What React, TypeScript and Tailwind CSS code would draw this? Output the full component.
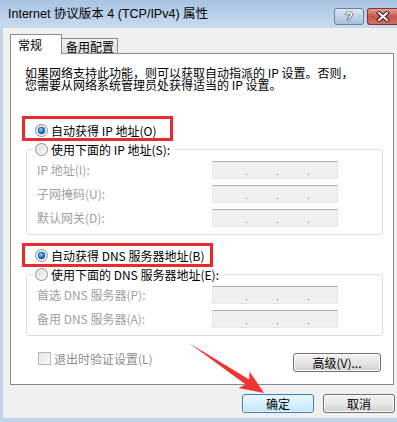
import type { ReactNode } from 'react';

const CJK = "font-['Noto_Sans_CJK_SC','Liberation_Sans',sans-serif]";

function Radio({ checked = false }: { checked?: boolean }) {
  return (
    <svg width="13" height="13" viewBox="0 0 13 13" className="shrink-0">
      <defs>
        <linearGradient id="rfill" x1="0" y1="0" x2="1" y2="1">
          <stop offset="0" stopColor="#d6d6d6" />
          <stop offset="1" stopColor="#ffffff" />
        </linearGradient>
        <radialGradient id="rdot" cx="0.4" cy="0.35" r="0.7">
          <stop offset="0" stopColor="#8fd3ff" />
          <stop offset="0.5" stopColor="#2a8ad4" />
          <stop offset="1" stopColor="#0f3f78" />
        </radialGradient>
      </defs>
      <circle cx="6.5" cy="6.5" r="6" fill="url(#rfill)" stroke="#8e8f8f" strokeWidth="1" />
      <circle cx="6.5" cy="6.5" r="4.5" fill="none" stroke="#f4f4f4" strokeWidth="1" />
      {checked && <circle cx="6.5" cy="6.5" r="3.4" fill="url(#rdot)" stroke="#1c4e86" strokeWidth="0.6" />}
    </svg>
  );
}

function IpField() {
  return (
    <div className="flex h-[18px] w-[126px] items-end gap-[30px] border border-[#e3e9ef] border-t-[#abadb3] bg-[#f0f0f0] pb-[3px] pl-[33px]">
      <span className="h-px w-px bg-[#6d6d6d]" />
      <span className="h-px w-px bg-[#6d6d6d]" />
      <span className="h-px w-px bg-[#6d6d6d]" />
    </div>
  );
}

function FieldRow({ label }: { label: string }) {
  return (
    <div className="flex items-center">
      <span className="w-[175px] text-[12px] leading-[12px] text-[#a0a0a0]">{label}</span>
      <IpField />
    </div>
  );
}

function Group({ legend, children }: { legend: string; children: ReactNode }) {
  return (
    <fieldset className="ml-[15px] mt-[6px] w-[357px] rounded-[3px] border border-[#d5dfe5] pb-[7px]">
      <legend className="ml-[7px] flex items-center gap-[3px] pl-[1px] pr-[5px]">
        <Radio />
        <span className="text-[12px] leading-[13px] text-black">{legend}</span>
      </legend>
      <div className="mt-[5px] flex flex-col gap-[6px] pl-[10px]">{children}</div>
    </fieldset>
  );
}

function WinButton({ children, primary = false, className = '' }: { children: ReactNode; primary?: boolean; className?: string }) {
  return (
    <button
      type="button"
      className={
        'flex h-[19px] items-center justify-center rounded-[3px] border text-[12px] leading-[12px] text-black ' +
        (primary
          ? 'border-[#3c7fb1] bg-gradient-to-b from-[#eaf6fd] via-[#d9f0fc] to-[#bee6fd] shadow-[inset_0_0_0_1px_#e4f3fb]'
          : 'border-[#707070] bg-gradient-to-b from-[#f2f2f2] via-[#e6e6e6] to-[#d0d0d0] shadow-[inset_0_0_0_1px_#fcfcfc]') +
        ' ' +
        className
      }
    >
      {children}
    </button>
  );
}

export default function App() {
  return (
    <div className={`relative flex h-[422px] w-[397px] flex-col overflow-hidden bg-[#bfd5ec] ${CJK}`}>
      {/* title bar */}
      <div className="flex h-[28px] items-start bg-gradient-to-b from-[#a9c3e2] to-[#c8dbf0]">
        <span className="ml-[8px] mt-[7px] font-['Liberation_Sans','Noto_Sans_CJK_SC',sans-serif] text-[12.5px] leading-[15px] text-black">
          Internet 协议版本 4 (TCP/IPv4) 属性
        </span>
        <div className="ml-auto mt-[8px] flex gap-[3px]">
          <div className="flex h-[17px] w-[30px] items-center justify-center rounded-[3px] border border-[#6f7f99] bg-gradient-to-b from-[#dbe7f5] to-[#a7c0df]">
            <span className="font-['Liberation_Sans',sans-serif] text-[13px] font-bold leading-[13px] text-white [text-shadow:0_0_1px_#222,0_0_1px_#222,0_0_1px_#222]">
              ?
            </span>
          </div>
          <div className="flex h-[17px] w-[30px] items-center justify-center rounded-l-[3px] border border-r-0 border-[#80333a] bg-gradient-to-b from-[#e4a093] via-[#c75448] to-[#d1715f]">
            <svg width="14" height="11" viewBox="0 0 14 11">
              <path d="M3 2 L11 9 M11 2 L3 9" stroke="#3a1a1a" strokeWidth="4" strokeLinecap="square" />
              <path d="M3 2 L11 9 M11 2 L3 9" stroke="#ffffff" strokeWidth="2" strokeLinecap="square" />
            </svg>
          </div>
        </div>
      </div>

      {/* client area */}
      <div className="ml-[3px] flex h-[390px] flex-col bg-[#f0f0f0]">
        {/* tabs */}
        <div className="ml-[7px] mt-[6px] flex h-[20px] items-end">
          <div className="relative z-10 flex h-[20px] w-[52px] items-start border border-b-0 border-[#898c95] bg-white pl-[7px] pt-[3px] text-[12px] leading-[13px] text-black">
            常规
          </div>
          <div className="flex h-[16px] w-[56px] items-start border border-b-0 border-l-0 border-[#898c95] bg-gradient-to-b from-[#f2f2f2] to-[#e1e1e1] pl-[4px] pt-[1px] text-[12px] leading-[13px] text-black">
            备用配置
          </div>
        </div>

        {/* panel */}
        <div className="ml-[7px] mt-[-1px] flex h-[332px] w-[384px] flex-col border border-[#898c95] bg-white">
          <div className="ml-[14px] mt-[13px] text-[12px] text-black">
            <div className="h-[12px] leading-[12px]">如果网络支持此功能，则可以获取自动指派的 IP 设置。否则，</div>
            <div className="h-[12px] leading-[12px]">您需要从网络系统管理员处获得适当的 IP 设置。</div>
          </div>

          <div className="ml-[24px] mt-[33px] flex h-[13px] items-center gap-[3px]">
            <Radio checked />
            <span className="text-[12px] leading-[13px] text-black">自动获得 IP 地址(O)</span>
          </div>

          <Group legend="使用下面的 IP 地址(S):">
            <FieldRow label="IP 地址(I):" />
            <FieldRow label="子网掩码(U):" />
            <FieldRow label="默认网关(D):" />
          </Group>

          <div className="ml-[24px] mt-[14px] flex h-[13px] items-center gap-[3px]">
            <Radio checked />
            <span className="text-[12px] leading-[13px] text-black">自动获得 DNS 服务器地址(B)</span>
          </div>

          <Group legend="使用下面的 DNS 服务器地址(E):">
            <FieldRow label="首选 DNS 服务器(P):" />
            <FieldRow label="备用 DNS 服务器(A):" />
          </Group>

          <div className="mt-[16px] flex items-start">
            <div className="ml-[27px] flex items-center gap-[3px]">
              <span className="h-[13px] w-[13px] border border-[#b9b9b9] bg-gradient-to-br from-[#e4e4e4] to-[#fbfbfb]" />
              <span className="text-[12px] leading-[13px] text-[#8d8d8d]">退出时验证设置(L)</span>
            </div>
            <WinButton className="ml-auto mr-[12px] mt-[1px] w-[88px]">高级(V)...</WinButton>
          </div>
        </div>

        {/* dialog buttons */}
        <div className="mt-[9px] flex justify-end gap-[9px] pr-[2px]">
          <WinButton primary className="w-[72px]">确定</WinButton>
          <WinButton className="w-[72px]">取消</WinButton>
        </div>
      </div>

      {/* annotation overlays */}
      <div className="absolute left-[22px] top-[116px] h-[25px] w-[151px] border-[3px] border-[#ea2a2e]" />
      <div className="absolute left-[22px] top-[243px] h-[24px] w-[191px] border-[3px] border-[#ea2a2e]" />
      <svg className="absolute left-0 top-0" width="397" height="422" viewBox="0 0 397 422">
        <polygon
          points="189,343 249.1,379.4 249.6,371.4 264,393 238.5,388 245.7,384.4"
          fill="#f03434"
        />
      </svg>
    </div>
  );
}
